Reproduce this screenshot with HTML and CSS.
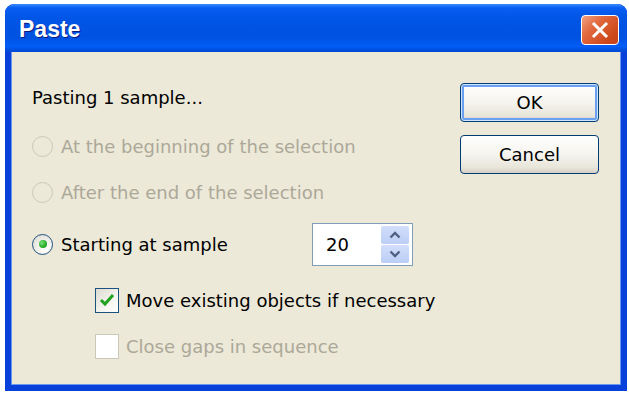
FILE: index.html
```html
<!DOCTYPE html>
<html lang="en">
<head>
    <meta charset="UTF-8">
    <title>Paste</title>
    <link rel="stylesheet" href="styles.css">
</head>
<body>

<div class="window">
    <div class="titlebar">
        <span class="title">Paste</span>
        <button class="close" aria-label="Close">
            <svg width="18" height="18" viewBox="0 0 18 18">
                <path d="M3 3 L15 15 M15 3 L3 15" stroke="#fff" stroke-width="3" stroke-linecap="square"/>
            </svg>
        </button>
    </div>

    <div class="body">
        <div class="options">
            <div class="row heading">Pasting 1 sample...</div>

            <label class="row radio-row disabled r1">
                <span class="radio"></span>
                <span class="text">At the beginning of the selection</span>
            </label>
            <label class="row radio-row disabled">
                <span class="radio"></span>
                <span class="text">After the end of the selection</span>
            </label>
            <div class="row radio-row r3">
                <label class="opt-wide">
                    <span class="radio checked"></span>
                    <span class="text">Starting at sample</span>
                </label>
                <div class="spin">
                    <span class="spin-value">20</span>
                    <div class="spin-buttons">
                        <span class="spin-btn">
                            <svg width="12" height="8" viewBox="0 0 12 8"><path d="M1.5 6.5 L6 2 L10.5 6.5" fill="none" stroke="#4d6185" stroke-width="2.4"/></svg>
                        </span>
                        <span class="spin-btn">
                            <svg width="12" height="8" viewBox="0 0 12 8"><path d="M1.5 1.5 L6 6 L10.5 1.5" fill="none" stroke="#4d6185" stroke-width="2.4"/></svg>
                        </span>
                    </div>
                </div>
            </div>

            <label class="row check-row c1">
                <span class="check checked">
                    <svg width="16" height="14" viewBox="0 0 16 14"><path d="M2 7 L6 11 L14 2" fill="none" stroke="#21a121" stroke-width="3"/></svg>
                </span>
                <span class="text">Move existing objects if necessary</span>
            </label>
            <label class="row check-row disabled">
                <span class="check"></span>
                <span class="text">Close gaps in sequence</span>
            </label>
        </div>

        <div class="actions">
            <button class="btn default">OK</button>
            <button class="btn">Cancel</button>
        </div>
    </div>
</div>

</body>
</html>
```

FILE: styles.css
```css
body {
    margin: 0;
    background: #ffffff;
    font-family: "DejaVu Sans", Verdana, sans-serif;
    font-size: 18px;
    color: #000000;
}
.window {
    margin: 4px 2px 0 5px;
    width: 622px;
    height: 387px;
    display: flex;
    flex-direction: column;
    border-radius: 9px 9px 0 0;
    overflow: hidden;
    background: #0841d9;
}
.titlebar {
    height: 48px;
    display: flex;
    align-items: center;
    justify-content: space-between;
    padding: 0 8px 0 14px;
    background: linear-gradient(to bottom, #3b8cff 0%, #0a5ef2 8%, #0055e6 30%, #0052e0 70%, #005ef8 88%, #0047d0 100%);
}
.title {
    color: #ffffff;
    font-family: "Liberation Sans", Arial, sans-serif;
    font-weight: bold;
    font-size: 23px;
    text-shadow: 1px 1px 0 #0a1a80;
    margin-top: 2px;
}
.close {
    width: 38px;
    height: 30px;
    margin-top: 4px;
    padding: 0;
    border: 1px solid #ffffff;
    border-radius: 4px;
    background: linear-gradient(135deg, #f1a183 0%, #e2683e 35%, #cf4b1d 75%, #c4431a 100%);
    display: flex;
    align-items: center;
    justify-content: center;
}
.body {
    flex: 1;
    margin: 0 6px 6px 6px;
    background: #ece9d8;
    box-shadow: inset 1px 0 0 #6b98f1, inset -1px 0 0 #6b98f1, inset 0 -1px 0 #6b98f1;
    display: flex;
    justify-content: space-between;
}
.options {
    padding: 28px 0 0 21px;
    display: flex;
    flex-direction: column;
}
.row {
    height: 46px;
    display: flex;
    align-items: center;
}
.heading {
    height: 34px;
}
.r1 {
    margin-top: 9px;
}
.r3 {
    margin-top: 6px;
}
.c1 {
    margin-top: 10px;
}
.check-row {
    padding-left: 63px;
}
.opt-wide {
    width: 280px;
    display: flex;
    align-items: center;
}
.radio {
    width: 19px;
    height: 19px;
    border: 1px solid #1c5180;
    border-radius: 50%;
    background: radial-gradient(circle at 65% 70%, #ffffff 0%, #f3f2ec 40%, #d8d6cc 100%);
    margin-right: 8px;
    display: flex;
    align-items: center;
    justify-content: center;
    flex: none;
}
.radio.checked::after {
    content: "";
    width: 8px;
    height: 8px;
    border-radius: 50%;
    background: radial-gradient(circle at 35% 35%, #7fe07f 0%, #2ab12a 55%, #178a17 100%);
}
.check {
    width: 22px;
    height: 23px;
    border: 1px solid #1c5180;
    background: linear-gradient(135deg, #dcdad0 0%, #f6f5f0 60%, #ffffff 100%);
    margin-right: 7px;
    display: flex;
    align-items: center;
    justify-content: center;
    flex: none;
}
.disabled .text {
    color: #aca899;
}
.disabled .radio {
    border-color: #cac8bb;
    background: #ece9d8;
}
.disabled .check {
    border-color: #cac8bb;
    background: #ffffff;
}
.spin {
    width: 99px;
    height: 41px;
    border: 1px solid #7f9db9;
    background: #ffffff;
    display: flex;
    justify-content: space-between;
}
.spin-value {
    padding-left: 13px;
    align-self: center;
}
.spin-buttons {
    width: 28px;
    margin: 2px 3px 2px 0;
    display: flex;
    flex-direction: column;
    gap: 1px;
}
.spin-btn {
    flex: 1;
    border-radius: 2px;
    background: linear-gradient(to bottom, #d2defa 0%, #bccef6 100%);
    display: flex;
    align-items: center;
    justify-content: center;
}
.actions {
    padding: 31px 22px 0 0;
    display: flex;
    flex-direction: column;
    gap: 13px;
}
.btn {
    width: 139px;
    height: 39px;
    border: 1px solid #003c74;
    border-radius: 4px;
    background: linear-gradient(to bottom, #ffffff 0%, #f5f4ee 50%, #e8e5da 85%, #d6d0c5 100%);
    font-family: "DejaVu Sans", Verdana, sans-serif;
    font-size: 18px;
    color: #000000;
    padding: 0;
}
.btn.default {
    box-shadow: inset 0 0 0 1px #cee7ff, inset 0 0 0 3px #6b9ff0;
}
```
